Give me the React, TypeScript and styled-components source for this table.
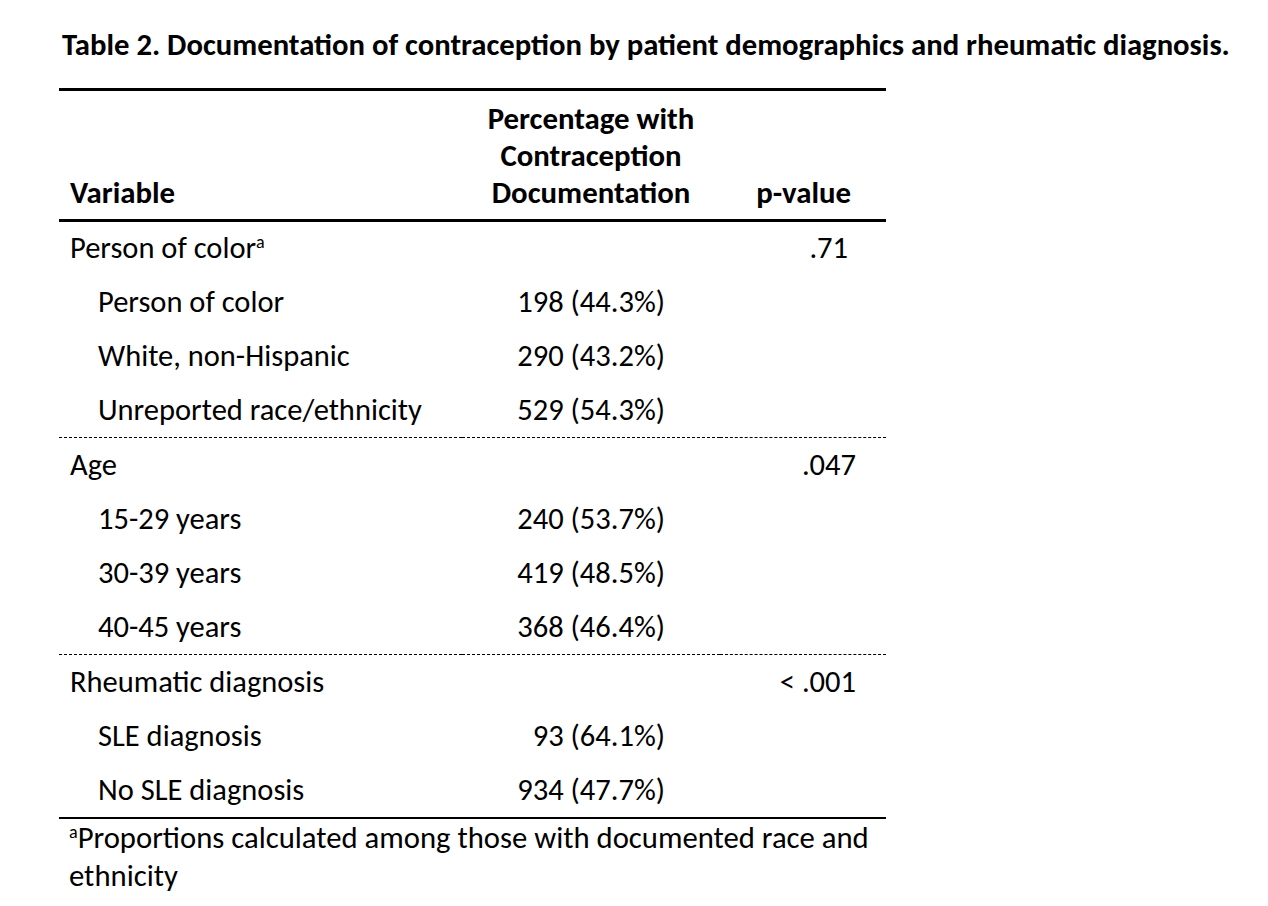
import styled, { createGlobalStyle } from "styled-components"

const GlobalStyle = createGlobalStyle`
    html, body {
        margin: 0;
        padding: 0;
        background: #ffffff;
    }
    body {
        font-family: Calibri, Carlito, Lato, "Liberation Sans", sans-serif;
        color: #000000;
    }
`

const Page = styled.div`
    width: 1268px;
    height: 906px;
    box-sizing: border-box;
    padding: 27px 0 0 59px;
    background: #ffffff;
`

const Title = styled.h1`
    margin: 0 0 0 3px;
    font-size: 30.7px;
    line-height: 36px;
    font-weight: 700;
    white-space: nowrap;
`

const Table = styled.table`
    margin-top: 25px;
    width: 827px;
    border-collapse: collapse;
    border-top: 3px solid #000;
    font-size: 30.5px;
`

const HeadCell = styled.th<{ align?: string; pad?: number }>`
    height: 131px;
    box-sizing: border-box;
    padding: 0 ${p => p.pad ?? 0}px 8px ${p => (p.align === "left" ? 11 : 0)}px;
    vertical-align: bottom;
    text-align: ${p => p.align ?? "center"};
    font-size: 30.8px;
    font-weight: 700;
    line-height: 37px;
    white-space: nowrap;
    border-bottom: 3px solid #000;
`

const Row = styled.tr<{ divider?: "dashed" | "solid" }>`
    height: ${p => (p.divider ? 55 : 54)}px;
    & > td {
        border-bottom: ${p => (p.divider ? `${p.divider === "solid" ? 2 : 1}px ${p.divider} #000` : "none")};
    }
`

const Label = styled.td<{ indent?: boolean }>`
    padding: 0 0 0 ${p => (p.indent ? 39 : 11)}px;
    line-height: 30px;
    white-space: nowrap;
`

const Count = styled.td`
    padding: 0 55px 0 0;
    text-align: right;
    line-height: 30px;
    white-space: nowrap;
`

const PValue = styled.td<{ pad: number }>`
    padding: 0 ${p => p.pad}px 0 0;
    text-align: right;
    line-height: 30px;
    white-space: nowrap;
`

const Sup = styled.sup`
    font-size: 18px;
    line-height: 0;
    vertical-align: 10px;
`

const Footnote = styled.p`
    margin: 0;
    padding: 0 0 0 10px;
    font-size: 30.7px;
    line-height: 38px;
    white-space: nowrap;
`

type Group = {
    title: React.ReactNode
    p: string
    pad: number
    divider: "dashed" | "solid"
    items: [string, string][]
}

const groups: Group[] = [
    {
        title: <>Person of color<Sup>a</Sup></>,
        p: ".71",
        pad: 38,
        divider: "dashed",
        items: [
            ["Person of color", "198 (44.3%)"],
            ["White, non-Hispanic", "290 (43.2%)"],
            ["Unreported race/ethnicity", "529 (54.3%)"],
        ],
    },
    {
        title: "Age",
        p: ".047",
        pad: 30,
        divider: "dashed",
        items: [
            ["15-29 years", "240 (53.7%)"],
            ["30-39 years", "419 (48.5%)"],
            ["40-45 years", "368 (46.4%)"],
        ],
    },
    {
        title: "Rheumatic diagnosis",
        p: "< .001",
        pad: 30,
        divider: "solid",
        items: [
            ["SLE diagnosis", "93 (64.1%)"],
            ["No SLE diagnosis", "934 (47.7%)"],
        ],
    },
]

export default function App() {
    return (
        <Page>
            <GlobalStyle />
            <Title>Table 2. Documentation of contraception by patient demographics and rheumatic diagnosis.</Title>
            <Table>
                <colgroup>
                    <col style={{ width: 403 }} />
                    <col style={{ width: 258 }} />
                    <col style={{ width: 166 }} />
                </colgroup>
                <thead>
                    <tr>
                        <HeadCell align="left">Variable</HeadCell>
                        <HeadCell>Percentage with<br />Contraception<br />Documentation</HeadCell>
                        <HeadCell align="right" pad={35}>p-value</HeadCell>
                    </tr>
                </thead>
                <tbody>
                    {groups.map(g => (
                        <>
                            <Row>
                                <Label>{g.title}</Label>
                                <Count />
                                <PValue pad={g.pad}>{g.p}</PValue>
                            </Row>
                            {g.items.map(([name, count], i) => (
                                <Row key={name} divider={i === g.items.length - 1 ? g.divider : undefined}>
                                    <Label indent>{name}</Label>
                                    <Count>{count}</Count>
                                    <PValue pad={0} />
                                </Row>
                            ))}
                        </>
                    ))}
                </tbody>
            </Table>
            <Footnote>
                <Sup>a</Sup>Proportions calculated among those with documented race and<br />ethnicity
            </Footnote>
        </Page>
    )
}
